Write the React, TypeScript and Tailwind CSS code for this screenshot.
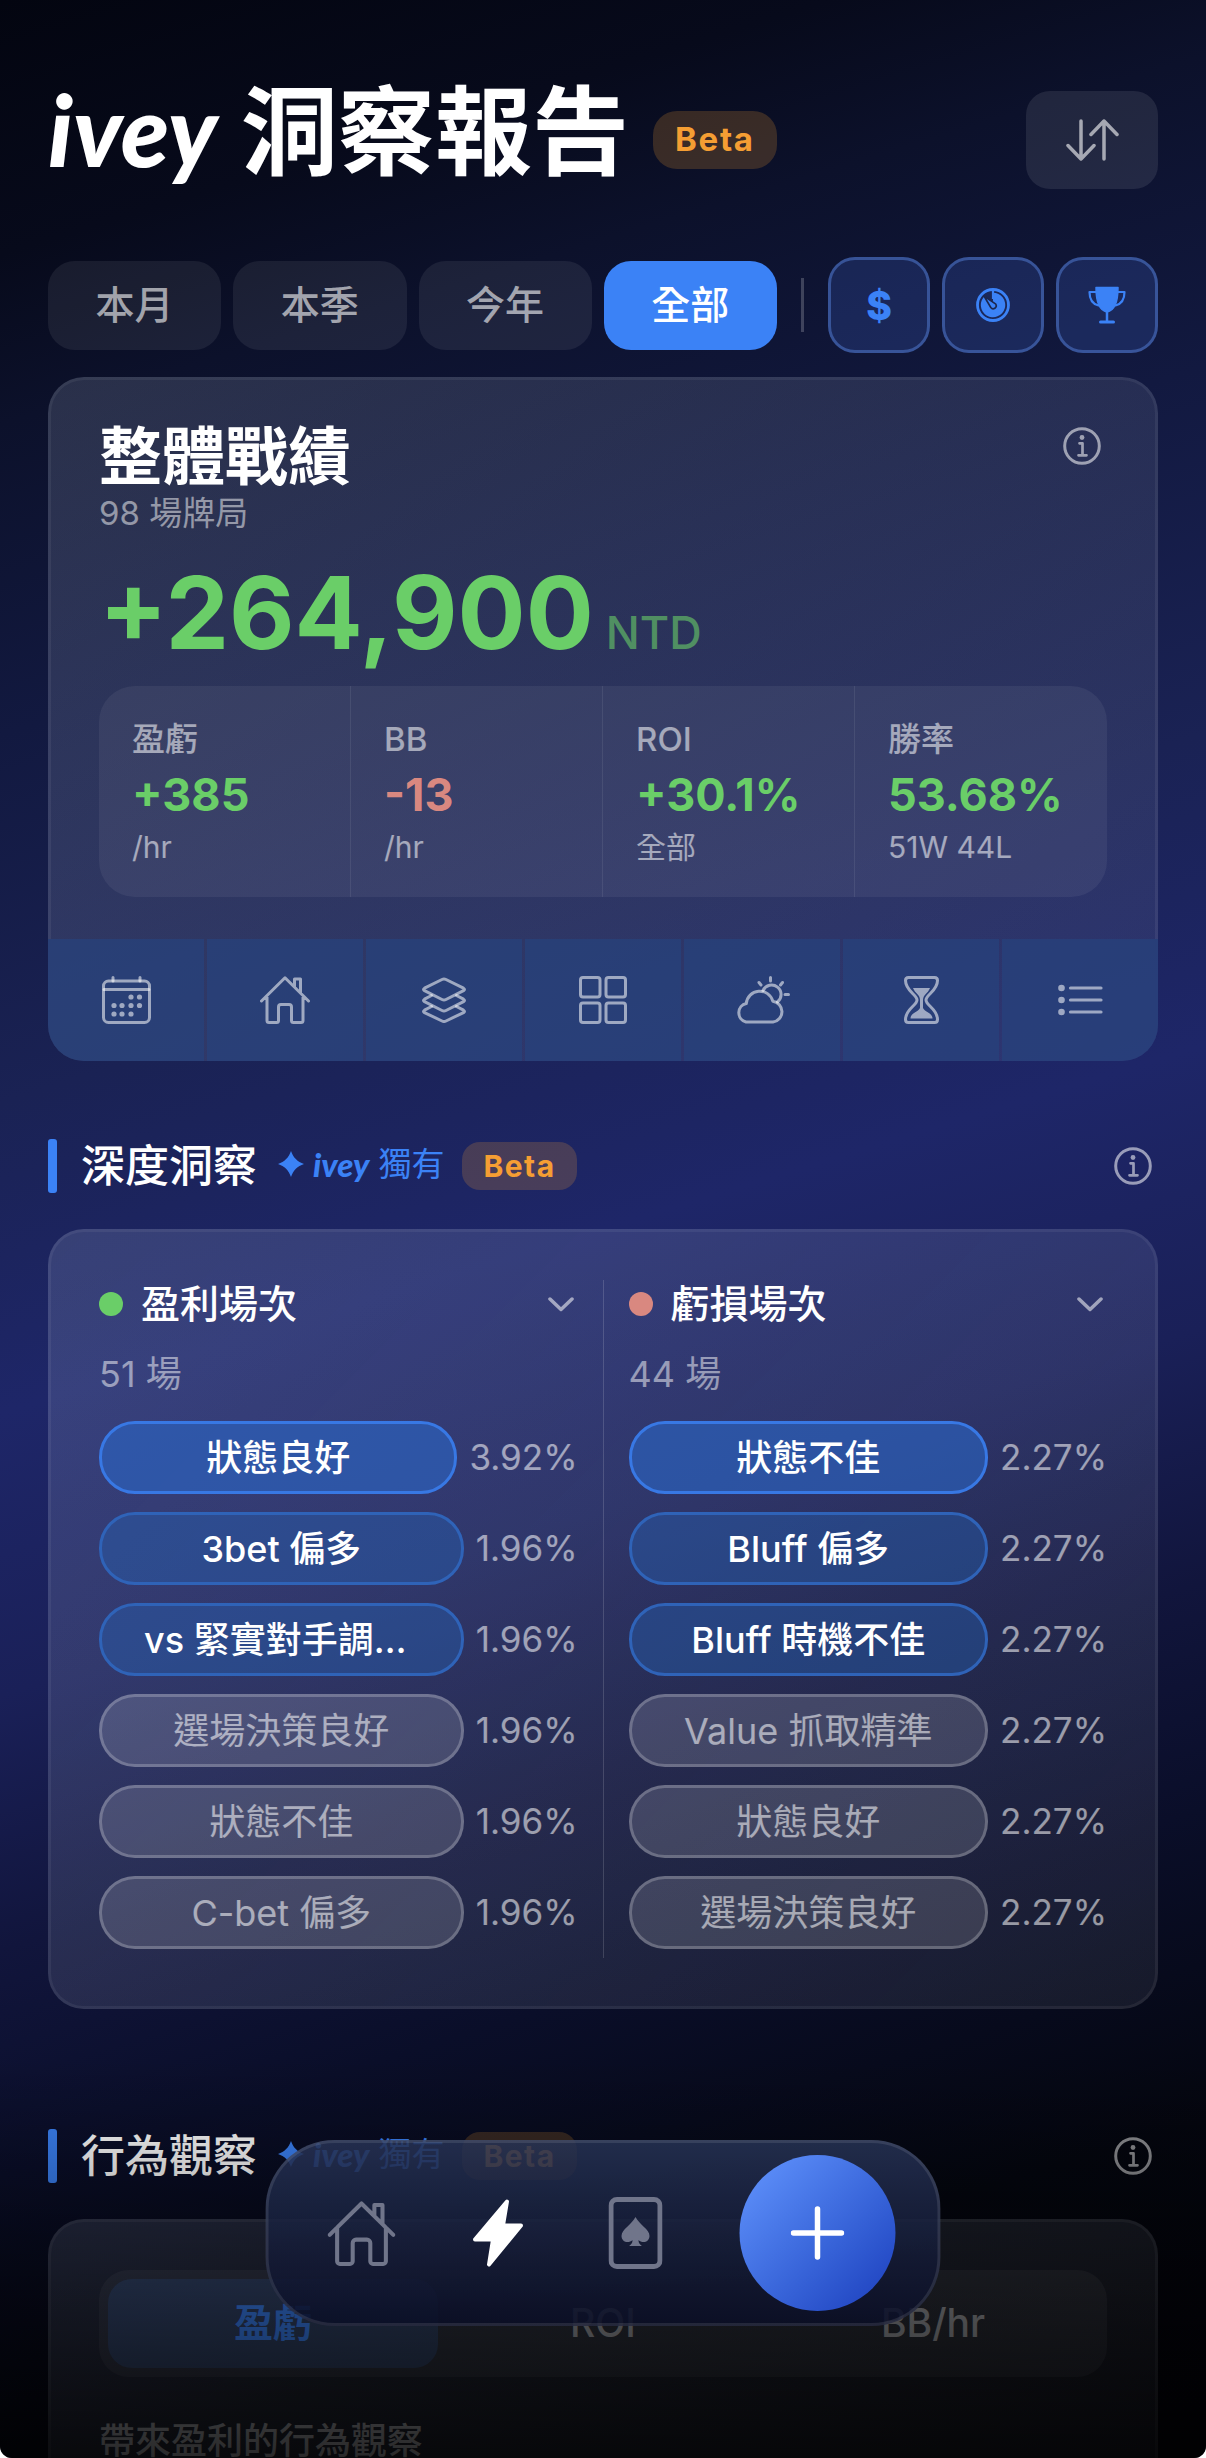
import { useState } from 'react';
import type { ReactNode } from 'react';
import { clsx } from 'clsx';

interface IconProps {
  className?: string;
}

interface Tag {
  label: string;
  rate: string;
}

interface TagColumnProps {
  title: string;
  count: string;
  dotClass: string;
  tags: Tag[];
}

const periods = ['本月', '本季', '今年', '全部'];

const stats = [
  { label: '盈虧', value: '+385', note: '/hr', positive: true },
  { label: 'BB', value: '-13', note: '/hr', positive: false },
  { label: 'ROI', value: '+30.1%', note: '全部', positive: true },
  { label: '勝率', value: '53.68%', note: '51W 44L', positive: true },
];

const winTags: Tag[] = [
  { label: '狀態良好', rate: '3.92%' },
  { label: '3bet 偏多', rate: '1.96%' },
  { label: 'vs 緊實對手調整良好', rate: '1.96%' },
  { label: '選場決策良好', rate: '1.96%' },
  { label: '狀態不佳', rate: '1.96%' },
  { label: 'C-bet 偏多', rate: '1.96%' },
];

const lossTags: Tag[] = [
  { label: '狀態不佳', rate: '2.27%' },
  { label: 'Bluff 偏多', rate: '2.27%' },
  { label: 'Bluff 時機不佳', rate: '2.27%' },
  { label: 'Value 抓取精準', rate: '2.27%' },
  { label: '狀態良好', rate: '2.27%' },
  { label: '選場決策良好', rate: '2.27%' },
];

const metrics = ['盈虧', 'ROI', 'BB/hr'];

const cardClass =
  'rounded-[36px] bg-[linear-gradient(135deg,rgba(200,215,245,0.16),rgba(235,240,255,0.07))] bg-origin-border';

function SortIcon() {
  return (
    <svg width="53" height="42" viewBox="0 0 53 42" fill="none" stroke="currentColor" strokeWidth="3.5" strokeLinecap="round" strokeLinejoin="round">
      <path d="M15 2v38M2 26.500l13 13.500 13-13.500M38 40V2M25 15.500L38 2l13 13.500" />
    </svg>
  );
}

function TimerIcon() {
  return (
    <svg width="34" height="34" viewBox="0 0 34 34" fill="none">
      <circle cx="17" cy="17" r="15.500" stroke="currentColor" strokeWidth="2.800" />
      <path d="M17 4.800A12.200 12.200 0 1 1 8.800 8L16 17.500 17 12Z" fill="currentColor" />
      <path d="M8 8l6.800 11.500a3 3 0 0 0 5-3.300Z" fill="currentColor" stroke="#1c274f" strokeWidth="1.600" strokeLinejoin="round" />
      <path d="M17 1.500v9.500" stroke="currentColor" strokeWidth="2.200" />
    </svg>
  );
}

function TrophyIcon() {
  return (
    <svg width="38" height="38" viewBox="0 0 38 38" fill="none" stroke="currentColor" strokeLinecap="round" strokeLinejoin="round">
      <path d="M8 1.500h22c0 14-3 23-11 24.500C11 24.500 8 15.500 8 1.500Z" fill="currentColor" strokeWidth="1.500" />
      <path d="M8 6H1.500c0 7 3 12 9 13.500M30 6h6.500c0 7-3 12-9 13.500" strokeWidth="2.200" />
      <path d="M19 25v10" strokeWidth="2.500" />
      <path d="M12.500 36h13" strokeWidth="3" />
    </svg>
  );
}

function InfoIcon({ className }: IconProps) {
  return (
    <svg className={className} width="38" height="38" viewBox="0 0 38 38" fill="none" stroke="currentColor" strokeLinecap="round" strokeLinejoin="round">
      <circle cx="19" cy="19" r="17.300" strokeWidth="3" />
      <circle cx="19" cy="10.500" r="2.400" fill="currentColor" stroke="none" />
      <path d="M16.500 16.300H19.500V28M15.500 28.300h8" strokeWidth="2.700" />
    </svg>
  );
}

function CalendarIcon() {
  const dots = [
    [29, 21], [37.5, 21],
    [12, 29.5], [20, 29.5], [29, 29.5], [37.5, 29.5],
    [12, 38], [20, 38], [29, 38],
  ];
  return (
    <svg width="49" height="48" viewBox="0 0 49 48" fill="none" stroke="currentColor" strokeWidth="3" strokeLinecap="round">
      <rect x="1.500" y="5" width="46" height="41.500" rx="5" />
      <path d="M2 13.500h45M11 1.500V5M38 1.500V5" />
      {dots.map(([x, y]) => (
        <circle key={`${x}-${y}`} cx={x} cy={y} r="2.600" fill="currentColor" stroke="none" />
      ))}
    </svg>
  );
}

function HouseIcon({ className = 'w-[50px] h-12' }: IconProps) {
  return (
    <svg className={className} viewBox="0 0 50 48" fill="none" stroke="currentColor" strokeWidth="3" strokeLinecap="round" strokeLinejoin="round">
      <path d="M1.500 25L25 1.800 48.500 25M7 19.500v25a2 2 0 0 0 2 2h7.500a2 2 0 0 0 2-2V31a2.500 2.500 0 0 1 2.500-2.500h8a2.500 2.500 0 0 1 2.500 2.500v13.500a2 2 0 0 0 2 2H41a2 2 0 0 0 2-2v-25M34.500 11V3H40.500v14" />
    </svg>
  );
}

function LayersIcon() {
  return (
    <svg width="46" height="46" viewBox="0 0 46 46" fill="none" stroke="currentColor" strokeWidth="3" strokeLinecap="round" strokeLinejoin="round">
      <path d="M21 2.500q2-1 4 0l17.500 8.700q2 1.200 0 2.400L25 22.500q-2 1-4 0L3.500 13.600q-2-1.200 0-2.400Z" />
      <path d="M10.500 18.500l-7 3.700q-2 1.200 0 2.400L21 33.500q2 1 4 0l17.500-8.900q2-1.200 0-2.400l-7-3.700" />
      <path d="M10.500 29.500l-7 3.700q-2 1.200 0 2.400L21 44q2 1 4 0l17.500-8.400q2-1.200 0-2.400l-7-3.700" />
    </svg>
  );
}

function GridIcon() {
  return (
    <svg width="48" height="48" viewBox="0 0 48 48" fill="none" stroke="currentColor" strokeWidth="3">
      <rect x="1.500" y="1.500" width="19.500" height="19.500" rx="2.500" />
      <rect x="27" y="1.500" width="19.500" height="19.500" rx="2.500" />
      <rect x="1.500" y="27" width="19.500" height="19.500" rx="2.500" />
      <rect x="27" y="27" width="19.500" height="19.500" rx="2.500" />
    </svg>
  );
}

function CloudSunIcon() {
  return (
    <svg width="55" height="48" viewBox="0 0 55 48" fill="none" stroke="currentColor" strokeWidth="3" strokeLinecap="round" strokeLinejoin="round">
      <path d="M11 46a9.500 9.500 0 0 1 .3-18.500 13.500 13.500 0 0 1 26.500-2.300A10.500 10.500 0 0 1 38 46Z" />
      <path d="M28 14.500a9.500 9.500 0 1 1 14.500 11.500" />
      <path d="M35.500 1.500v3.500M24 6.500l2 2.500M47.500 6.500l-2 2.500M50 18.500h3.500" />
    </svg>
  );
}

function HourglassIcon() {
  return (
    <svg width="35" height="48" viewBox="0 0 35 48" fill="none" stroke="currentColor" strokeWidth="3" strokeLinejoin="round">
      <path d="M4.500 1.500h26q3 0 3 3C33.500 15 22 18.500 22 24s11.500 9 11.500 19.500q0 3-3 3h-26q-3 0-3-3C1.500 33 13 29.500 13 24S1.500 15 1.500 4.500q0-3 3-3Z" />
      <path d="M9 12h17c-2 5.500-7 6.500-7 12v8c1.500 4 9.500 4.500 9.500 10.500h-22C6.500 36.500 14.500 36 16 32v-8c0-5.500-5-6.500-7-12Z" fill="currentColor" stroke="none" />
    </svg>
  );
}

function ListIcon() {
  return (
    <svg width="45" height="32" viewBox="0 0 45 32" fill="none" stroke="currentColor" strokeWidth="3.200" strokeLinecap="round">
      <path d="M12.500 4H43M12.500 16H43M12.500 28H43" />
      <circle cx="3.500" cy="4" r="3.300" fill="currentColor" stroke="none" />
      <circle cx="3.500" cy="16" r="3.300" fill="currentColor" stroke="none" />
      <circle cx="3.500" cy="28" r="3.300" fill="currentColor" stroke="none" />
    </svg>
  );
}

function SparkleIcon() {
  return (
    <svg width="26" height="26" viewBox="0 0 24 24" fill="currentColor">
      <path d="M12 0c2 6 6 10 12 12-6 2-10 6-12 12-2-6-6-10-12-12 6-2 10-6 12-12Z" />
    </svg>
  );
}

function ChevronIcon() {
  return (
    <svg width="26" height="15" viewBox="0 0 26 15" fill="none" stroke="currentColor" strokeWidth="3.500" strokeLinecap="round" strokeLinejoin="round">
      <path d="M2 2l11 10.500L24 2" />
    </svg>
  );
}

function BoltIcon() {
  return (
    <svg width="51" height="68" viewBox="0 0 51 68" fill="currentColor" stroke="currentColor" strokeWidth="4" strokeLinejoin="round">
      <path d="M34.500 2.500L30.500 26.500H48.500L16.500 65.500L20.500 40.500H2.500Z" />
    </svg>
  );
}

function SpadeCardIcon() {
  return (
    <svg width="54" height="72" viewBox="0 0 54 72" fill="none">
      <rect x="2.500" y="2.500" width="49" height="67" rx="6" stroke="currentColor" strokeWidth="5" />
      <path d="M27 20c4 8 14 12 14 19 0 6-7 8-11 4 0 3 1 4 3 5.500V49H21v-.500c2-1.500 3-2.500 3-5.500-4 4-11 2-11-4 0-7 10-11 14-19Z" fill="currentColor" />
    </svg>
  );
}

function PlusIcon() {
  return (
    <svg width="54" height="54" viewBox="0 0 54 54" fill="none" stroke="currentColor" strokeWidth="5.500" strokeLinecap="round">
      <path d="M27 3v48M3 27h48" />
    </svg>
  );
}

const breakdowns: { name: string; icon: ReactNode }[] = [
  { name: '日期', icon: <CalendarIcon /> },
  { name: '場地', icon: <HouseIcon /> },
  { name: '級別', icon: <LayersIcon /> },
  { name: '類型', icon: <GridIcon /> },
  { name: '時段', icon: <CloudSunIcon /> },
  { name: '時長', icon: <HourglassIcon /> },
  { name: '列表', icon: <ListIcon /> },
];

const gameTypes: { name: string; icon: ReactNode }[] = [
  { name: '現金局', icon: <span className="text-[39px] leading-none font-extrabold">$</span> },
  { name: '計時', icon: <TimerIcon /> },
  { name: '錦標賽', icon: <TrophyIcon /> },
];

function SectionHeader({ title }: { title: string }) {
  return (
    <div className="flex items-center h-[54px] pr-1.5">
      <span className="w-[9px] h-full rounded-[3px] bg-[#3b82f6]" />
      <h2 className="ml-6 text-[44px] leading-[54px] font-medium text-white">{title}</h2>
      <div className="ml-[21px] flex items-center gap-[9px] pb-1 text-[#3b82f6]">
        <SparkleIcon />
        <span className="font-[Lato] text-[33px] leading-9 font-black italic">ivey</span>
        <span className="text-[33px] leading-9">獨有</span>
      </div>
      <span className="ml-[18px] flex items-center h-12 px-[21px] rounded-[18px] bg-[#f59e33]/20 text-[30px] font-bold tracking-wider text-[#f59e33]">
        Beta
      </span>
      <button aria-label={`${title}說明`} className="ml-auto text-white/55">
        <InfoIcon />
      </button>
    </div>
  );
}

function TagColumn({ title, count, dotClass, tags }: TagColumnProps) {
  return (
    <div className="flex-1 min-w-0 pb-[9px]">
      <button className="flex items-center w-full h-12 text-left">
        <span className={clsx('w-6 h-6 rounded-full', dotClass)} />
        <span className="ml-[18px] text-[39px] leading-[48px] font-medium text-white">{title}</span>
        <span className="ml-auto mr-1 text-white/55">
          <ChevronIcon />
        </span>
      </button>
      <p className="mt-6 text-[36px] leading-[45px] text-white/50">{count}</p>
      <ul className="mt-6 flex flex-col gap-[18px]">
        {tags.map((tag, index) => (
          <li key={tag.label} className="flex items-center gap-3">
            <button
              className={clsx(
                'flex-1 min-w-0 h-[73px] px-[42px] rounded-[36px] border-[3px] text-[36px] leading-[60px] truncate',
                index === 0 && 'bg-[#2c67c8]/60 border-[#3878e4] text-white font-medium',
                index > 0 && index < 3 && 'bg-[#2563b8]/40 border-[#2f63b8] text-white font-medium',
                index >= 3 && 'bg-white/14 border-white/22 text-white/55'
              )}
            >
              {tag.label}
            </button>
            <span className="text-[35px] leading-[45px] text-white/55">{tag.rate}</span>
          </li>
        ))}
      </ul>
    </div>
  );
}

function BottomNav() {
  return (
    <nav className="absolute bottom-[132px] left-1/2 -translate-x-1/2 z-20 flex items-center h-[186px] pl-6 pr-[42px] rounded-[69px] border-[3px] border-white/10 bg-linear-to-b from-[#273355]/85 to-[#0a0e26]/85 bg-origin-border">
      <button aria-label="首頁" className="flex justify-center w-[137px] text-[#70758a]">
        <HouseIcon className="w-[68px] h-[65px]" />
      </button>
      <button aria-label="洞察" className="flex justify-center w-[137px] text-white">
        <BoltIcon />
      </button>
      <button aria-label="牌局" className="flex justify-center w-[137px] text-[#70758a]">
        <SpadeCardIcon />
      </button>
      <button
        aria-label="新增"
        className="ml-9 flex items-center justify-center w-[156px] h-[156px] rounded-full bg-linear-to-br from-[#6496ff] to-[#1c3cbc] text-white"
      >
        <PlusIcon />
      </button>
    </nav>
  );
}

export default function App() {
  const [period, setPeriod] = useState('全部');
  const [metric, setMetric] = useState('盈虧');

  return (
    <div className="h-screen bg-white">
      <div className="relative h-full overflow-hidden rounded-b-xl font-['Inter','Noto_Sans_CJK_TC',sans-serif] bg-[linear-gradient(163deg,#030510_0%,#070a1b_9%,#0c112b_15%,#121940_26%,#1a2254_39%,#1e2668_50%,#1a2058_60%,#11153c_69%,#0a0e29_77%,#04060f_88%,#020208_100%)]">
        <main className="h-full overflow-y-auto px-12 pt-[91px] [scrollbar-width:none]">
          <header className="flex items-center">
            <h1 className="flex items-baseline gap-6 pb-4 text-[97px] leading-[82px] font-bold text-white">
              <span className="font-[Lato] text-[99px] leading-[70px] font-black italic">ivey</span>
              洞察報告
            </h1>
            <span className="ml-6 flex items-center h-[58px] px-[22px] rounded-3xl bg-[#f59e33]/20 text-[33px] font-bold tracking-wider text-[#f59e33]">
              Beta
            </span>
            <button
              aria-label="排序"
              className="ml-auto flex items-center justify-center w-[132px] h-[98px] rounded-3xl bg-white/9 text-white/60"
            >
              <SortIcon />
            </button>
          </header>

          <div className="mt-[68px] flex items-center">
            <div className="flex flex-1 gap-3">
              {periods.map((item) => (
                <button
                  key={item}
                  onClick={() => setPeriod(item)}
                  className={clsx(
                    'flex-1 h-[89px] rounded-[27px] text-[39px] font-medium',
                    period === item ? 'bg-[#3b82f6] text-white' : 'bg-white/7 text-white/60'
                  )}
                >
                  {item}
                </button>
              ))}
            </div>
            <span className="mx-6 w-[3px] h-[54px] bg-white/20" />
            <div className="flex gap-3">
              {gameTypes.map((type) => (
                <button
                  key={type.name}
                  aria-label={type.name}
                  className="flex items-center justify-center w-[102px] h-24 rounded-[27px] border-[3px] border-[#5078cc]/55 bg-[#3554a8]/30 text-[#3b82f6]"
                >
                  {type.icon}
                </button>
              ))}
            </div>
          </div>

          <section className={clsx(cardClass, 'mt-6 overflow-hidden')}>
            <div className="px-12 pt-[39px] pb-[42px] rounded-t-[36px] border-[3px] border-b-0 border-white/6">
              <div className="flex items-start justify-between pr-1.5">
                <div>
                  <h2 className="text-[63px] leading-[75px] font-bold text-white">整體戰績</h2>
                  <p className="text-[33px] leading-[39px] text-white/50">98 場牌局</p>
                </div>
                <button aria-label="整體戰績說明" className="mt-2 text-white/55">
                  <InfoIcon />
                </button>
              </div>
              <p className="mt-[30px] flex items-baseline gap-3 text-[#6ace68]">
                <span className="text-[101px] leading-[99px] font-bold">+264,900</span>
                <span className="text-[45px] leading-[45px] font-medium opacity-60">NTD</span>
              </p>
              <dl className="mt-6 grid grid-cols-4 divide-x divide-white/8 rounded-[36px] bg-white/6">
                {stats.map((stat) => (
                  <div key={stat.label} className="px-[33px] py-7">
                    <dt className="text-[33px] leading-[51px] font-medium text-white/55">{stat.label}</dt>
                    <dd className={clsx('text-[45px] leading-[60px] font-bold', stat.positive ? 'text-[#6ace68]' : 'text-[#d98880]')}>
                      {stat.value}
                    </dd>
                    <dd className="text-[30px] leading-[44px] text-white/55">{stat.note}</dd>
                  </div>
                ))}
              </dl>
            </div>
            <div className="flex gap-[3px]">
              {breakdowns.map((item) => (
                <button
                  key={item.name}
                  aria-label={item.name}
                  className="flex flex-1 items-center justify-center h-[122px] bg-[#27437d]/70 text-white/55"
                >
                  {item.icon}
                </button>
              ))}
            </div>
          </section>

          <section className="mt-[78px]">
            <SectionHeader title="深度洞察" />
            <div className={clsx(cardClass, 'mt-9 flex p-12 border-[3px] border-white/6')}>
              <TagColumn title="盈利場次" count="51 場" dotClass="bg-[#6ace68]" tags={winTags} />
              <span className="mx-[25px] w-px bg-white/15" />
              <TagColumn title="虧損場次" count="44 場" dotClass="bg-[#d98880]" tags={lossTags} />
            </div>
          </section>

          <section className="mt-[120px]">
            <SectionHeader title="行為觀察" />
            <div className={clsx(cardClass, 'mt-9 p-12 pb-[360px] border-[3px] border-white/6')}>
              <div className="flex p-[9px] rounded-[30px] bg-white/6">
                {metrics.map((item) => (
                  <button
                    key={item}
                    onClick={() => setMetric(item)}
                    className={clsx(
                      'flex-1 h-[89px] rounded-3xl text-[39px]',
                      metric === item ? 'bg-[#3b82f6]/20 font-bold text-[#3b82f6]' : 'font-medium text-white/50'
                    )}
                  >
                    {item}
                  </button>
                ))}
              </div>
              <h3 className="mt-10 text-[36px] leading-[48px] font-medium text-white/60">帶來盈利的行為觀察</h3>
            </div>
          </section>
        </main>

        {/* fades the scrolled content out behind the nav */}
        <div className="pointer-events-none absolute inset-x-0 bottom-0 z-10 h-[400px] bg-linear-to-b from-black/0 to-black/75" />
        <BottomNav />
      </div>
    </div>
  );
}
